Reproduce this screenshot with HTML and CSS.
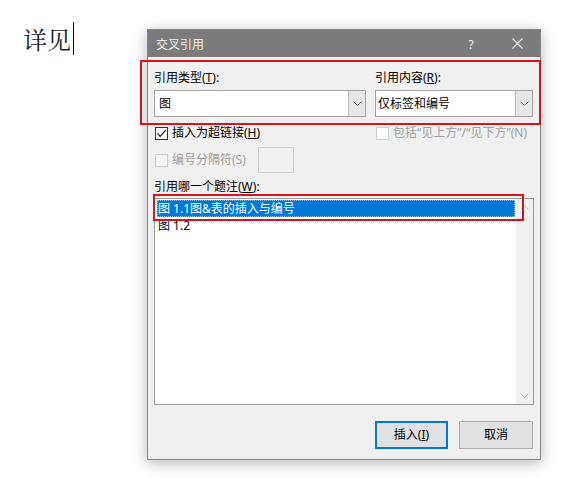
FILE: index.html
```html
<!DOCTYPE html>
<html lang="zh-CN">
<head>
<meta charset="utf-8">
<title>交叉引用</title>
<link rel="stylesheet" href="styles.css">
</head>
<body>
<div class="doc"><span class="doc-text">详见</span><span class="caret"></span></div>

<div class="dialog">
  <div class="titlebar">
    <span class="title">交叉引用</span>
    <span class="tb-btns">
      <span class="tb-btn help">?</span>
      <span class="tb-btn close">
        <svg width="11" height="11" viewBox="0 0 11 11"><path d="M0.5 0.5L10.5 10.5M10.5 0.5L0.5 10.5" stroke="#f2f2f2" stroke-width="1.1" fill="none"/></svg>
      </span>
    </span>
  </div>
  <div class="content">
    <div class="row two">
      <div class="col c1">
        <div class="label">引用类型(<u>T</u>):</div>
        <div class="combo"><span class="val">图</span><span class="drop"><svg width="9" height="5" viewBox="0 0 9 5"><path d="M0.5 0.5L4.5 4.5L8.5 0.5" stroke="#6a6a6a" stroke-width="1" fill="none"/></svg></span></div>
      </div>
      <div class="col c2">
        <div class="label">引用内容(<u>R</u>):</div>
        <div class="combo"><span class="val v2">仅标签和编号</span><span class="drop"><svg width="9" height="5" viewBox="0 0 9 5"><path d="M0.5 0.5L4.5 4.5L8.5 0.5" stroke="#6a6a6a" stroke-width="1" fill="none"/></svg></span></div>
      </div>
    </div>

    <div class="row checks">
      <div class="chk c1">
        <span class="box"><svg width="11" height="11" viewBox="0 0 11 11"><path d="M1.5 5.5L4.2 8.3L9.8 2" stroke="#222" stroke-width="1.2" fill="none"/></svg></span>
        <span class="chk-text">插入为超链接(<u>H</u>)</span>
      </div>
      <div class="chk c2 disabled">
        <span class="box"></span>
        <span class="chk-text">包括“见上方”/“见下方”(N)</span>
      </div>
    </div>

    <div class="row sep">
      <div class="chk disabled">
        <span class="box"></span>
        <span class="chk-text">编号分隔符(S)</span>
      </div>
      <span class="sep-input"></span>
    </div>

    <div class="label l3">引用哪一个题注(<u>W</u>):</div>

    <div class="list">
      <div class="items">
        <div class="item sel">图 1.1图&amp;表的插入与编号</div>
        <div class="item">图 1.2</div>
      </div>
      <div class="scroll">
        <span class="arrow"><svg width="9" height="5" viewBox="0 0 9 5"><path d="M0.5 4.5L4.5 0.5L8.5 4.5" stroke="#c2c2c2" stroke-width="1" fill="none"/></svg></span>
        <span class="arrow"><svg width="9" height="5" viewBox="0 0 9 5"><path d="M0.5 0.5L4.5 4.5L8.5 0.5" stroke="#c2c2c2" stroke-width="1" fill="none"/></svg></span>
      </div>
    </div>

    <div class="buttons">
      <button class="btn default">插入(<u>I</u>)</button>
      <button class="btn cancel">取消</button>
    </div>
  </div>
</div>

<div class="mark m1"></div>
<div class="mark m2"></div>
</body>
</html>
```

FILE: styles.css
```css
html, body {
  margin: 0;
  padding: 0;
  background: #ffffff;
  width: 588px;
  height: 478px;
  overflow: hidden;
}

body {
  position: relative;
  font-family: "Noto Sans", "Noto Sans CJK SC", sans-serif;
}

.doc {
  padding: 22px 0 0 23px;
  font-family: "Noto Serif CJK SC", "Noto Sans CJK SC", serif;
  font-size: 24px;
  line-height: 33px;
  color: #1a1a1a;
  display: flex;
  align-items: flex-start;
}

.doc-text {
  display: block;
}

.caret {
  display: block;
  width: 1px;
  height: 33px;
  background: #000;
  margin-left: 2px;
}

.dialog {
  position: absolute;
  left: 147px;
  top: 29px;
  width: 394px;
  height: 431px;
  box-sizing: border-box;
  border: 1px solid #858585;
  background: #f0f0f0;
  box-shadow: 0 3px 14px rgba(0, 0, 0, 0.28);
  font-size: 12px;
  color: #000;
}

.titlebar {
  height: 27px;
  background: #7b7b7b;
  display: flex;
  align-items: center;
  justify-content: space-between;
  color: #f2f2f2;
}

.title {
  padding-left: 8px;
  line-height: 27px;
  font-family: "Noto Sans CJK SC", sans-serif;
  font-size: 12px;
}

.tb-btns {
  display: flex;
  height: 27px;
}

.tb-btn {
  width: 46px;
  height: 27px;
  display: flex;
  align-items: center;
  justify-content: center;
}

.help {
  font-family: "Noto Sans", sans-serif;
  font-size: 12px;
  padding-top: 1px;
  box-sizing: border-box;
}

.content {
  padding: 12px 7px 0 6px;
}

.row {
  display: flex;
}

.two {
  gap: 9px;
}

.c1 {
  width: 212px;
  flex: none;
}

.c2 {
  width: 158px;
  flex: none;
}

.label {
  height: 17px;
  line-height: 17px;
  margin-bottom: 4px;
  white-space: nowrap;
}

.combo {
  height: 27px;
  box-sizing: border-box;
  border: 1px solid #a2a2a2;
  background: #fff;
  display: flex;
  align-items: stretch;
}

.val {
  flex: 1;
  line-height: 25px;
  padding-left: 4px;
}

.val.v2 {
  padding-left: 2px;
}

.drop {
  width: 17px;
  box-sizing: border-box;
  border-left: 1px solid #b8b8b8;
  background: #e6e6e6;
  display: flex;
  align-items: center;
  justify-content: center;
}

.checks {
  margin-top: 8px;
  height: 16px;
  gap: 9px;
}

.chk {
  display: flex;
  align-items: center;
  height: 16px;
  white-space: nowrap;
}

.chk .box {
  width: 13px;
  height: 13px;
  box-sizing: border-box;
  border: 1px solid #333;
  background: #fff;
  margin-left: 1px;
  margin-right: 4px;
  display: flex;
  align-items: center;
  justify-content: center;
  flex: none;
}

.chk.disabled {
  color: #a0a0a0;
}

.chk.disabled .box {
  border-color: #cccccc;
  background: #fff;
}

.chk-text {
  line-height: 16px;
}

.sep {
  margin-top: 6px;
  height: 26px;
  align-items: center;
}

.sep .chk .box {
  background: #f4f4f4;
}

.sep-input {
  width: 36px;
  height: 26px;
  box-sizing: border-box;
  border: 1px solid #cccccc;
  background: #f0f0f0;
  margin-left: 12px;
}

.l3 {
  margin-top: 5px;
  margin-bottom: 3px;
}

.list {
  height: 207px;
  box-sizing: border-box;
  border: 1px solid #9a9a9a;
  background: #fff;
  display: flex;
  margin-right: -1px;
}

.items {
  flex: 1;
  padding: 1px 1px 0 2px;
}

.item {
  height: 17px;
  line-height: 17px;
  padding-left: 1px;
  white-space: nowrap;
}

.item.sel {
  background: #0078d7;
  color: #fff;
  outline: 1px dotted #8fc0ea;
  outline-offset: -1px;
}

.scroll {
  width: 17px;
  flex: none;
  background: #f0f0f0;
  display: flex;
  flex-direction: column;
  justify-content: space-between;
}

.arrow {
  height: 17px;
  display: flex;
  align-items: center;
  justify-content: center;
}

.buttons {
  margin-top: 16px;
  display: flex;
  justify-content: flex-end;
  gap: 11px;
}

.btn {
  height: 28px;
  box-sizing: border-box;
  background: #e1e1e1;
  border: 1px solid #adadad;
  font-family: "Noto Sans", "Noto Sans CJK SC", sans-serif;
  font-size: 12px;
  color: #000;
  padding: 0;
  line-height: 24px;
}

.btn.default {
  width: 73px;
  border: 2px solid #0078d7;
}

.btn.cancel {
  width: 74px;
}

.mark {
  position: absolute;
  box-sizing: border-box;
  border: 2px solid #d3141c;
  pointer-events: none;
}

.m1 {
  left: 140px;
  top: 60px;
  width: 401px;
  height: 65px;
}

.m2 {
  left: 153px;
  top: 194px;
  width: 371px;
  height: 27px;
}
```
